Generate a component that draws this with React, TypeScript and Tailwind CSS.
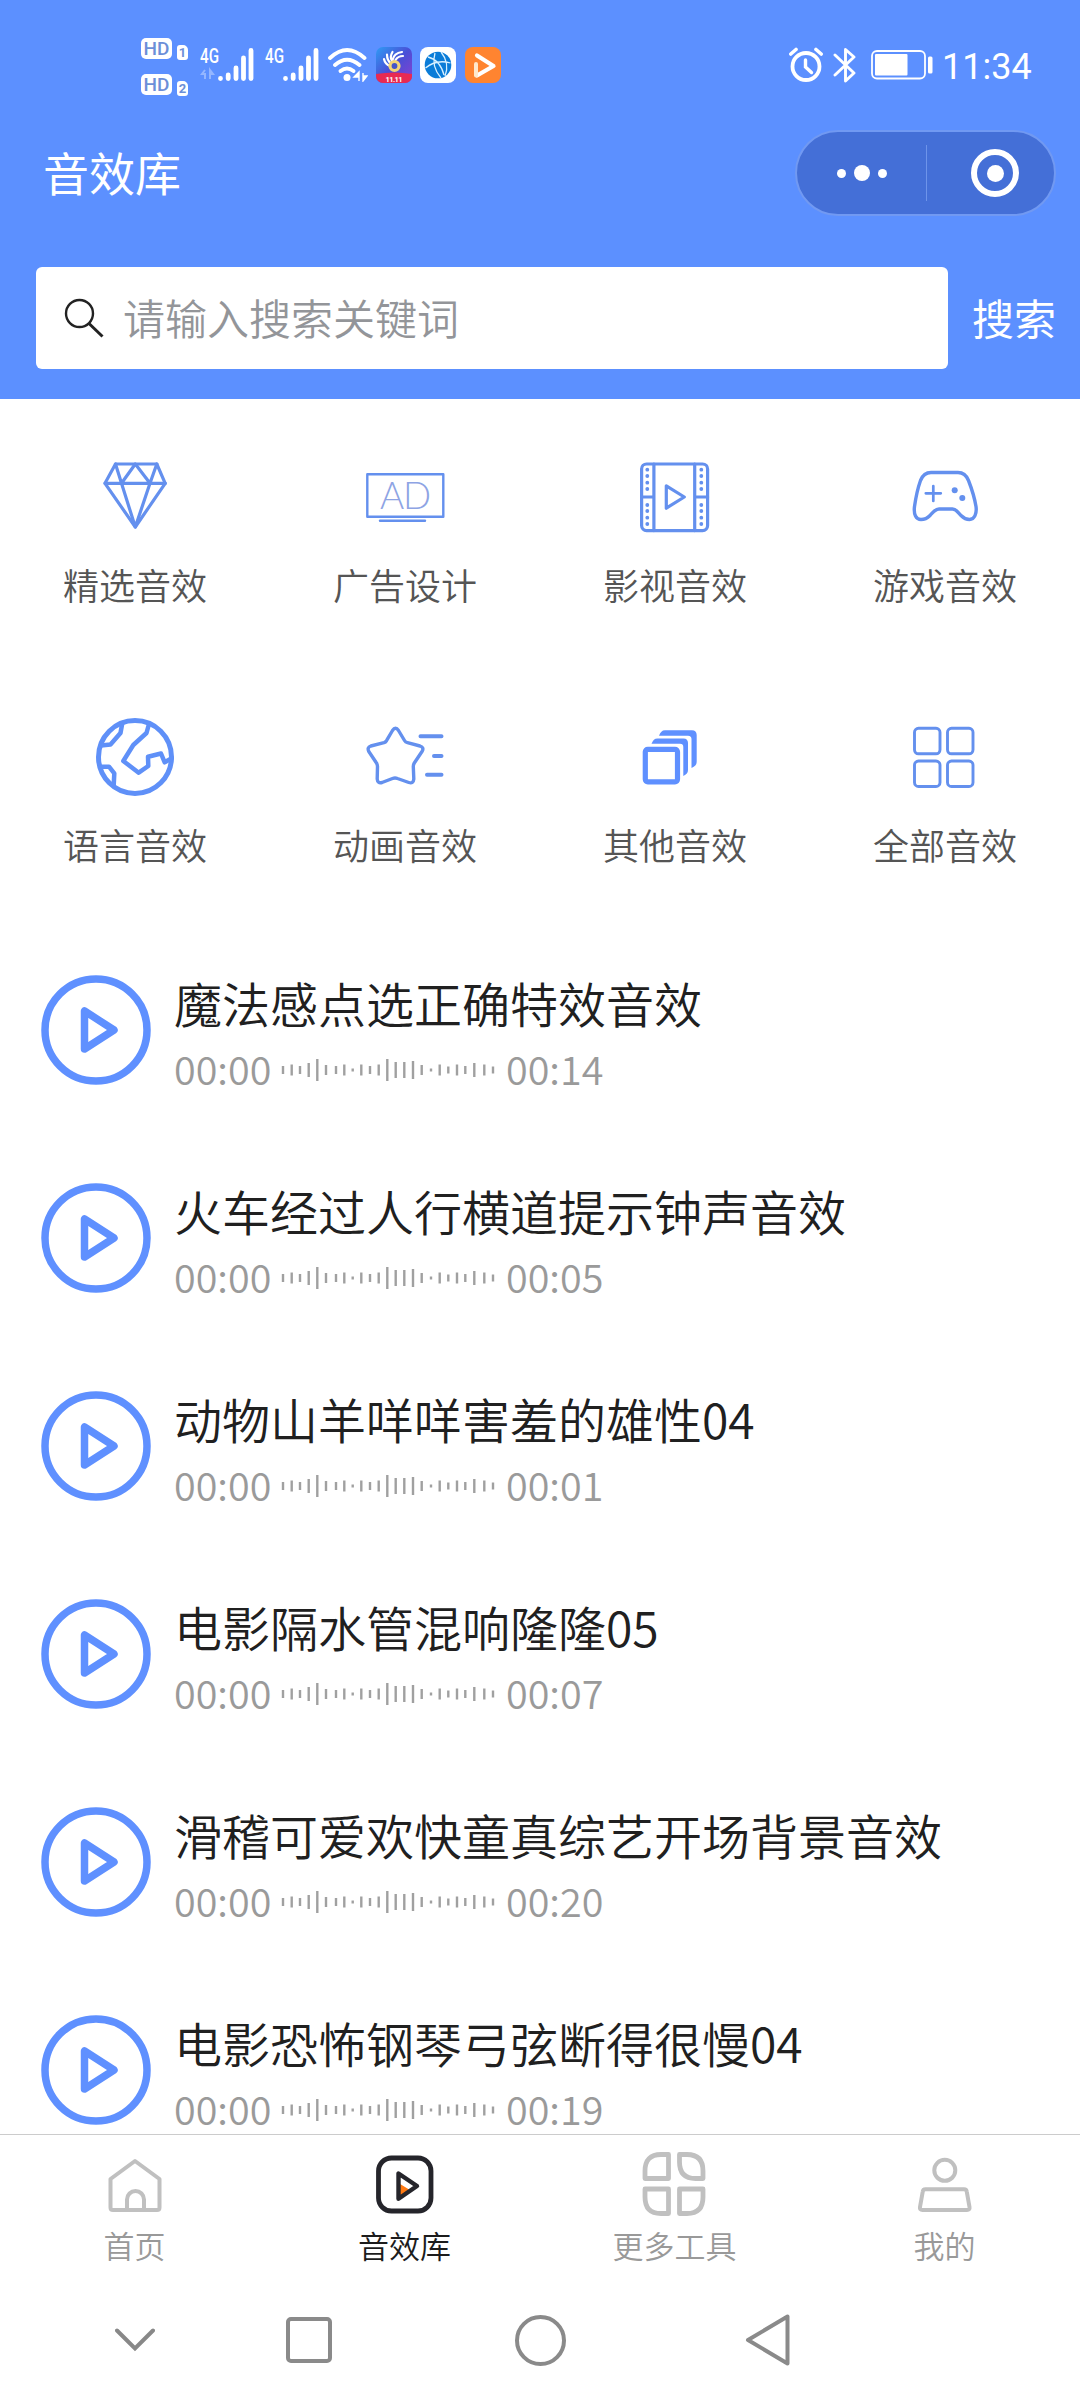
import type { ReactNode } from 'react';

interface Category {
    label: string,
    icon: ReactNode
}

interface Sound {
    title: string,
    duration: string
}

interface Tab {
    label: string,
    icon: ReactNode,
    active?: boolean
}

const categories: Category[] = [
    {
        label: '精选音效',
        icon: (
            <g strokeWidth="3.2">
                <path d="M20.5 7h41.300l8.400 19.300L40.300 70 10 26.300z" />
                <path d="M10 26.300h60.400M20.500 7l6 19.300L40.300 7 55 26.300 61.800 7M26.500 26.300 40.300 70 55 26.300" />
            </g>
        ),
    },
    {
        label: '广告设计',
        icon: (
            <g strokeWidth="2.4">
                <rect x="2.300" y="17.300" width="76" height="42.400" />
                <path d="M15 63.700h45" />
                <text x="15" y="51.500" textLength="51" fontSize="37" className="fill-[#8ea4e4] stroke-none font-['Lato'] font-light">AD</text>
            </g>
        ),
    },
    {
        label: '影视音效',
        icon: (
            <g strokeWidth="3.2">
                <rect x="6.600" y="7" width="66" height="66.600" rx="5" />
                <path d="M18.900 7v66.600M59.700 7v66.600M6.600 40h12.300M59.700 40h12.900" />
                <path d="M31.300 28.800 49.300 40l-18 11.200z" />
                {[12.7, 19, 25.7, 32, 48, 54, 60.7, 67].map((y) => (
                    <g key={y} className="fill-[#6490ee] stroke-none">
                        <circle cx="12.300" cy={y} r="1.900" />
                        <circle cx="66.300" cy={y} r="1.900" />
                    </g>
                ))}
            </g>
        ),
    },
    {
        label: '游戏音效',
        icon: (
            <g strokeWidth="3.400">
                <path d="M26 15.500h27c6 0 8.500 3 10.500 8 3.500 9 6 17 7.500 26 1 7-1.500 13-6.500 13-4 0-6-1.500-8.500-4-3.500-3.500-4.500-6.500-8.500-6.500H34c-4 0-5.500 3-9 6.500-3 3-5 4-9 4-5 0-7.500-5-6.500-13 1.300-9 3-17.500 6-26 2-5 4.500-8 10.500-8z" />
                <path d="M28.300 29v15M20.800 36.300h15" strokeWidth="2.700" />
                <circle cx="49.700" cy="33.300" r="3" className="fill-[#6490ee] stroke-none" />
                <circle cx="57.300" cy="41" r="3" className="fill-[#6490ee] stroke-none" />
            </g>
        ),
    },
    {
        label: '语言音效',
        icon: (
            <g strokeWidth="4.500" className="stroke-[#5f90f8]">
                <circle cx="40" cy="40" r="36.500" strokeWidth="5" />
                <path d="M27.300 6 25.500 16 15.500 27.500 6 28.500M7 49.700h7l5.300 6.600-.6 12" />
                <path d="M54 7 51.500 16 38.300 28 28.300 44l15.400 11.700 9.600-6.700-.3-9.300 13-3.200 3.700 8.800 7-4" />
            </g>
        ),
    },
    {
        label: '动画音效',
        icon: (
            <g strokeWidth="3.400">
                <path d="M27.500 13.500q3-4.500 6 0l6 10q1 1.700 3 2.200l12.500 3.300q4.500 1.500 2 5.500l-7.700 11.500q-1 1.500-1 3.500l.5 12.500q-.5 5-5 3.500l-11.300-4q-2.500-1-5 0l-10.500 4q-4.500 1.200-4.800-3.500l.3-12.500q0-2-1.200-3.700L3.800 34.500q-2-4 2-5.500l13.200-3.300q1.500-.5 2.500-2z" />
                <path d="M55.500 19.300h21M69 39h7.500M62 57.700h14.500" strokeWidth="4" />
            </g>
        ),
    },
    {
        label: '其他音效',
        icon: (
            <g className="stroke-[#5f90ff]">
                <rect x="10.300" y="32.300" width="32.200" height="32.500" rx="2.500" strokeWidth="5.200" />
                <path d="M16.500 26.800c1.500-3.500 3-5.300 6-5.300h26c3 0 4.500 1.800 4.500 4.500v27c0 3-1.500 4.500-4.700 6V30c0-2-1-3.200-3.300-3.200zM24 18.700c1.500-3.500 3-5.400 6-5.400h27c3 0 4.700 1.800 4.700 4.700v26.500c0 3-1.500 5-5.200 6.500V22c0-2-1-3.300-3.500-3.300z" className="fill-[#5f90ff] stroke-none" />
            </g>
        ),
    },
    {
        label: '全部音效',
        icon: (
            <g strokeWidth="2.900">
                <rect x="9.500" y="11.300" width="25.500" height="25.500" rx="4" />
                <rect x="42.500" y="11.300" width="25.500" height="25.500" rx="4" />
                <rect x="9.500" y="44" width="25.500" height="25.500" rx="4" />
                <rect x="42.500" y="44" width="25.500" height="25.500" rx="4" />
            </g>
        ),
    },
];

const sounds: Sound[] = [
    { title: '魔法感点选正确特效音效', duration: '00:14' },
    { title: '火车经过人行横道提示钟声音效', duration: '00:05' },
    { title: '动物山羊咩咩害羞的雄性04', duration: '00:01' },
    { title: '电影隔水管混响隆隆05', duration: '00:07' },
    { title: '滑稽可爱欢快童真综艺开场背景音效', duration: '00:20' },
    { title: '电影恐怖钢琴弓弦断得很慢04', duration: '00:19' },
];

const tabs: Tab[] = [
    {
        label: '首页',
        icon: (
            <g strokeWidth="4">
                <path d="M32 8 56.500 26v28.500q0 2.500-2.500 2.500H10q-2.500 0-2.500-2.500V26z" />
                <path d="M24 57V46.500a8.500 8.500 0 0 1 17 0V57" />
            </g>
        ),
    },
    {
        label: '音效库',
        active: true,
        icon: (
            <g strokeWidth="4.800">
                <rect x="5.500" y="5" width="52.500" height="53" rx="13" />
                <path d="m25.500 30 13 8-13 9z" className="fill-[#ff7a12] stroke-none" />
                <path d="M25.500 20.500v25.300l18.500-12.800z" strokeWidth="4.400" />
            </g>
        ),
    },
    {
        label: '更多工具',
        icon: (
            <g strokeWidth="4.800">
                <path d="M18 1.500h7.500v24H2V18Q2 1.500 18 1.500z" />
                <path d="M36.500 1.500H44Q60 1.500 60 18v7.500h-7.500q-16 0-16-16.500z" />
                <path d="M2 36h23.500v24.500H18Q2 60.500 2 44z" />
                <path d="M36.500 36H60v8q0 16.500-16 16.500h-7.500z" />
            </g>
        ),
    },
    {
        label: '我的',
        icon: (
            <g strokeWidth="4">
                <circle cx="31.800" cy="17.300" r="10.500" />
                <path d="M12.500 36.300h38.500q2.500 0 2.800 2.500L56.500 54q.5 3-2.500 3H9.500q-3 0-2.500-3l2.700-15.200q.3-2.500 2.800-2.500z" />
            </g>
        ),
    },
];

// [x, hauteur] de chaque barre
const wave = [
    [3, 8], [11.7, 11], [20, 8], [28.7, 14], [37.3, 22], [46, 10], [56, 8], [64.3, 11], [72.7, 3],
    [81.3, 11], [90, 8], [98.7, 11], [107.3, 22], [115.7, 16], [124.3, 16], [133, 18], [141.7, 10],
    [151, 3], [159.7, 11], [168.3, 7], [177, 11], [185.3, 8], [194.3, 14], [204.3, 11], [213, 7],
];

function HdBadge({ sim }: { sim: string }) {
    return (
        <div className="flex items-end gap-[5px]">
            <span className="flex h-[21px] w-[31px] items-center justify-center rounded-[5px] bg-white text-[19px] leading-[21px] font-medium text-[#6c8fd8] font-['Roboto']">HD</span>
            <span className="-mb-px flex h-[15px] w-[11px] items-center justify-center rounded-[3px] rounded-tr-[5px] bg-white text-[13px] leading-[15px] font-bold text-[#6c8fd8] font-['Roboto']">{sim}</span>
        </div>
    );
}

function Signal({ data }: { data?: boolean }) {
    return (
        <svg width="54" height="34" viewBox="0 0 54 34" className="shrink-0 overflow-visible">
            <text x="0" y="14.500" fontSize="20" textLength="19" lengthAdjust="spacingAndGlyphs" className="fill-white font-['Roboto'] font-medium">4G</text>
            {data && <path d="m5 22-3 4h3v5M10 31v-9l3 4h-3" fill="none" stroke="#94b6ff" strokeWidth="2" />}
            <path d="M20.500 30.500v0M28.200 27v3.500M36 20v10.500M43.500 10v20.500M51 2.500v28" stroke="#fff" strokeWidth="4.800" strokeLinecap="round" />
        </svg>
    );
}

function StatusBar() {
    return (
        <div className="flex h-[130px] items-center pr-[50px] pl-[141px]">
            <div className="mt-0.5 flex flex-col gap-[15px]">
                <HdBadge sim="1" />
                <HdBadge sim="2" />
            </div>
            <div className="ml-3 flex gap-[11px]">
                <Signal data />
                <Signal />
            </div>
            <svg width="40" height="34" viewBox="0 0 40 34" className="ml-[9px]">
                <g fill="none" stroke="#fff" strokeWidth="3.800" strokeLinecap="round">
                    <path d="M2 10Q19-6 36.500 10M7 17q12-10.500 24.500 0M12.500 23q6.500-5 13 0" />
                </g>
                <circle cx="19" cy="29.500" r="3.500" fill="#fff" />
                <path d="m31 24-5 5h5zM31 24v9M35 33v-8M35 33l4-5h-4z" fill="#fff" stroke="#fff" strokeWidth="1.400" />
            </svg>
            <svg width="36" height="36" viewBox="0 0 36 36" className="ml-[8px]">
                <defs>
                    <linearGradient id="promo" x1="0" y1="0" x2="1" y2="1">
                        <stop offset="0" stopColor="#2f9cf5" />
                        <stop offset=".5" stopColor="#4a4fd6" />
                        <stop offset="1" stopColor="#8b3fd0" />
                    </linearGradient>
                    <clipPath id="promoClip"><rect width="36" height="36" rx="7" /></clipPath>
                </defs>
                <g clipPath="url(#promoClip)">
                    <rect width="36" height="36" fill="url(#promo)" />
                    <path d="M0 27q18-3 36 0v9H0z" fill="#e82a52" />
                </g>
                <path d="M8 12q1 5 6 7M11 7.500q0 6 4 9M16.500 5q-3 5-.5 9M26 5q-8 1-9.500 8M27 9q-5 0-7.500 4" fill="none" stroke="#fff" strokeWidth="2.200" strokeLinecap="round" />
                <circle cx="18.500" cy="19" r="4.500" fill="#4455c8" stroke="#f3d477" strokeWidth="3.200" />
                <text x="9.500" y="34.500" fontSize="7.500" textLength="17" className="fill-white font-['Roboto'] font-bold">11.11</text>
            </svg>
            <svg width="36" height="36" viewBox="0 0 36 36" className="ml-2">
                <rect width="36" height="36" rx="8" fill="#fff" />
                <circle cx="18" cy="18" r="13.300" fill="#0a7cd8" />
                <path d="M15 6q-4 13 6 25M5.500 21q11-9 25-5M21 5q9 11 4 24M8 10q12 3 16 18" fill="none" stroke="#d8f0ff" strokeWidth="1.300" />
            </svg>
            <svg width="36" height="36" viewBox="0 0 36 36" className="ml-[9px]">
                <rect width="36" height="36" rx="8" fill="#ff8430" />
                <path d="M12 28.500 28.500 19 12 8.500" fill="none" stroke="#fff" strokeWidth="4.200" strokeLinejoin="round" strokeLinecap="round" />
                <path d="M11 28.500V17" stroke="#ffe8cc" strokeWidth="4" strokeLinecap="round" />
            </svg>

            <svg width="34" height="36" viewBox="0 0 34 36" className="ml-auto" fill="none" stroke="#fff" strokeLinecap="round">
                <circle cx="17" cy="19.500" r="13.500" strokeWidth="3.800" />
                <path d="M1.800 7 7 2.500M32.200 7 27 2.500" strokeWidth="3.600" />
                <path d="M16.500 13v7l6 5.500" strokeWidth="3.400" />
            </svg>
            <svg width="24" height="36" viewBox="0 0 24 36" className="ml-[10px]" fill="none" stroke="#fff" strokeWidth="2.900" strokeLinejoin="round" strokeLinecap="round">
                <path d="m2 8 19 18-8.500 8V2.500L21 10 2 28" />
            </svg>
            <svg width="63" height="30" viewBox="0 0 63 30" className="ml-[14px]">
                <rect x="1" y="1" width="53" height="27.500" rx="5" fill="none" stroke="#fff" strokeWidth="1.800" />
                <rect x="4" y="4" width="32.500" height="21.500" rx="1" fill="#fff" />
                <rect x="57" y="6.500" width="4.500" height="17" rx="1.500" fill="#fff" />
            </svg>
            <span className="mt-[4px] ml-[8px] w-[88px] text-[36px] leading-none text-white font-['Roboto']">11:34</span>
        </div>
    );
}

function Header() {
    return (
        <header className="h-[399px] shrink-0 bg-[#5c90ff] text-white">
            <StatusBar />
            <div className="flex h-[86px] items-center justify-between pr-6 pl-[43px]">
                <h1 className="-mt-[4px] text-[46px] leading-none">音效库</h1>
                <div className="flex h-[86px] w-[261px] items-center rounded-full border-2 border-[#7199f2] bg-[#446fd7]">
                    <div className="flex w-[129px] items-center justify-center gap-2">
                        <i className="size-[9px] rounded-full bg-white" />
                        <i className="size-4 rounded-full bg-white" />
                        <i className="size-[9px] rounded-full bg-white" />
                    </div>
                    <div className="h-14 w-px bg-[#6e94ea]" />
                    <div className="flex flex-1 items-center justify-center pl-[9px]">
                        <div className="flex size-12 items-center justify-center rounded-full border-[6px] border-white">
                            <i className="size-[17px] rounded-full bg-white" />
                        </div>
                    </div>
                </div>
            </div>
            <div className="mt-[51px] flex items-center pl-9">
                <div className="flex h-[102px] w-[912px] items-center rounded-md bg-white pl-[28px]">
                    <svg width="40" height="40" viewBox="0 0 40 40" fill="none" stroke="#222" strokeWidth="2.400">
                        <circle cx="15.500" cy="15.500" r="13.500" />
                        <path d="m25 25.500 13.500 13" strokeWidth="3" />
                    </svg>
                    <span className="-mt-[2px] ml-[19px] text-[42px] leading-none font-[350] text-[#939599]">请输入搜索关键词</span>
                </div>
                <span className="-mt-[2px] ml-6 text-[42px] leading-none">搜索</span>
            </div>
        </header>
    );
}

function SoundRow({ title, duration }: Sound) {
    return (
        <li className="flex h-[208px] items-center pl-[41px]">
            <svg width="110" height="110" viewBox="0 0 110 110" className="shrink-0" fill="none" stroke="#5f90ff" strokeLinejoin="round">
                <circle cx="55" cy="55" r="51" strokeWidth="7.500" />
                <path d="M43.500 36v38L73 55z" strokeWidth="7.500" />
            </svg>
            <div className="mt-[5px] ml-[23px] flex flex-col">
                <h3 className="h-[70px] text-[48px] leading-[70px] font-[350] text-[#202020]">{title}</h3>
                <div className="flex h-[62px] items-center text-[39.500px] leading-[62px] font-[350] text-[#9a9a9a]">
                    <span className="w-[106px]">00:00</span>
                    <svg width="216" height="26" viewBox="0 0 216 26" className="mt-[4px] mr-[10px]" stroke="#a0a0a0" strokeWidth="2.400">
                        {wave.map(([x, h]) => (
                            <path key={x} d={`M${x} ${13 - h / 2}v${h}`} />
                        ))}
                    </svg>
                    <span>{duration}</span>
                </div>
            </div>
        </li>
    );
}

function TabBar() {
    return (
        <nav className="grid h-[146px] shrink-0 grid-cols-4 border-t border-[#cccccc] bg-white">
            {tabs.map((tab) => (
                <div key={tab.label} className={`flex flex-col items-center pt-[14px] ${tab.active ? 'text-[#1c1c1c]' : 'text-[#999999]'}`}>
                    <svg width="72" height="72" viewBox="-4 -4 72 72" fill="none" stroke={tab.active ? '#25252b' : '#c0c0c0'} strokeLinejoin="round">
                        {tab.icon}
                    </svg>
                    <span className="mt-[1px] mr-px text-[31px] leading-[46px] font-[350]">{tab.label}</span>
                </div>
            ))}
        </nav>
    );
}

function SystemNav() {
    return (
        <div className="flex h-[120px] shrink-0 items-center bg-white pl-[115px]">
            <svg width="40" height="52" viewBox="0 0 40 52" fill="none" stroke="#888" strokeWidth="4">
                <path d="m2 16.500 18 18 18-18" strokeLinecap="round" />
            </svg>
            <i className="ml-[131px] size-[46px] rounded-[5px] border-4 border-[#8a8a8a]" />
            <i className="ml-[183px] size-[51px] rounded-full border-4 border-[#8a8a8a]" />
            <svg width="46" height="52" viewBox="0 0 46 52" className="ml-[179px]" fill="none" stroke="#8a8a8a" strokeWidth="4" strokeLinejoin="round">
                <path d="M42.500 2.500v47L3 26z" />
            </svg>
        </div>
    );
}

export default function App() {
    return (
        <div className="flex h-[2400px] w-[1080px] flex-col overflow-hidden bg-white font-['Noto_Sans_CJK_SC',sans-serif]">
            <Header />
            <main className="min-h-0 flex-1 overflow-hidden">
                <section className="grid auto-rows-[260px] grid-cols-4">
                    {categories.map((category) => (
                        <div key={category.label} className="flex flex-col items-center pt-[58px]">
                            <svg width="80" height="80" viewBox="0 0 80 80" fill="none" stroke="#6490ee" strokeLinejoin="round" strokeLinecap="round">
                                {category.icon}
                            </svg>
                            <span className="mt-[20px] text-[36px] leading-[54px] font-[350] text-[#555555]">{category.label}</span>
                        </div>
                    ))}
                </section>
                <ul className="mt-[7px]">
                    {sounds.map((sound) => (
                        <SoundRow key={sound.title} {...sound} />
                    ))}
                </ul>
            </main>
            <TabBar />
            <SystemNav />
        </div>
    );
}
